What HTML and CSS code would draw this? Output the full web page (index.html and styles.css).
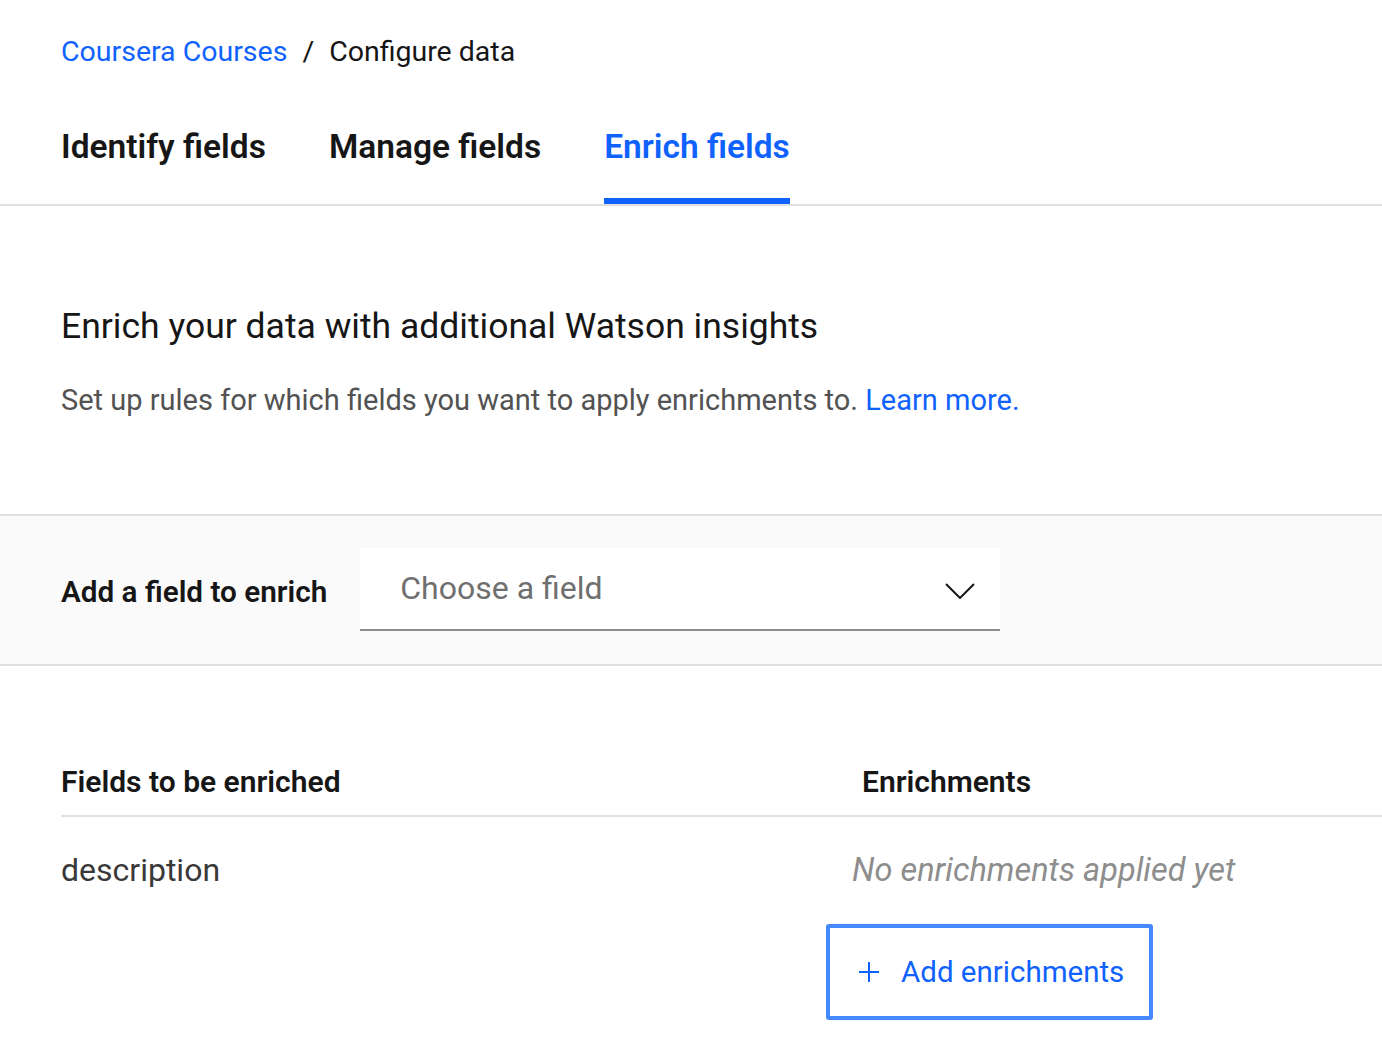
FILE: index.html
```html
<!DOCTYPE html>
<html lang="en">
<head>
<meta charset="utf-8">
<title>Configure data</title>
<link rel="stylesheet" href="styles.css">
</head>
<body>
  <nav class="breadcrumb">
    <a class="crumb-link" href="#">Coursera Courses</a>
    <span class="crumb-sep">/</span>
    <span class="crumb-current">Configure data</span>
  </nav>

  <div class="tabs">
    <div class="tab">Identify fields</div>
    <div class="tab">Manage fields</div>
    <div class="tab tab-active">Enrich fields</div>
  </div>

  <section class="intro">
    <h1 class="intro-title">Enrich your data with additional Watson insights</h1>
    <p class="intro-text">Set up rules for which fields you want to apply enrichments to. <a class="learn" href="#">Learn more.</a></p>
  </section>

  <section class="picker">
    <span class="picker-label">Add a field to enrich</span>
    <div class="select">
      <span class="select-placeholder">Choose a field</span>
      <svg class="chevron" width="30" height="16" viewBox="0 0 30 16" aria-hidden="true">
        <path d="M1 1 L15 15 L29 1" fill="none" stroke="#161616" stroke-width="2"/>
      </svg>
    </div>
  </section>

  <section class="table">
    <div class="table-head">
      <div class="col-field">Fields to be enriched</div>
      <div class="col-enrich head-enrich">Enrichments</div>
    </div>
    <div class="table-row">
      <div class="col-field field-name">description</div>
      <div class="col-enrich enrich-cell">
        <div class="empty-note">No enrichments applied yet</div>
        <button class="add-btn" type="button">
          <svg class="plus" width="22" height="22" viewBox="0 0 22 22" aria-hidden="true">
            <path d="M11 1 V21 M1 11 H21" fill="none" stroke="#0f62fe" stroke-width="2"/>
          </svg>
          <span>Add enrichments</span>
        </button>
      </div>
    </div>
  </section>
</body>
</html>
```

FILE: styles.css
```css
html, body {
  margin: 0;
  padding: 0;
  background: #ffffff;
  font-family: Roboto, "Noto Sans", "Liberation Sans", sans-serif;
  color: #161616;
}

.breadcrumb {
  display: flex;
  align-items: center;
  gap: 15px;
  padding: 34px 0 0 61px;
  font-size: 28.5px;
  line-height: 36px;
}

.crumb-link {
  color: #0f62fe;
  text-decoration: none;
}

.crumb-sep,
.crumb-current {
  color: #161616;
}

.tabs {
  display: flex;
  gap: 63px;
  padding: 0 0 0 61px;
  border-bottom: 2px solid #e0e0e0;
}

.tab {
  padding: 57px 0 31px;
  font-size: 33.5px;
  line-height: 40px;
  font-weight: 600;
  color: #161616;
  border-bottom: 6px solid transparent;
}

.tab-active {
  color: #0f62fe;
  border-bottom-color: #0f62fe;
}

.intro {
  padding: 100px 0 0 61px;
}

.intro-title {
  margin: 0;
  font-size: 35.5px;
  line-height: 40px;
  font-weight: 400;
  color: #161616;
}

.intro-text {
  margin: 36px 0 0;
  font-size: 29px;
  line-height: 36px;
  color: #525252;
}

.learn {
  color: #0f62fe;
  text-decoration: none;
}

.picker {
  margin-top: 96px;
  display: flex;
  align-items: center;
  gap: 33px;
  padding: 32px 0 33px 61px;
  background: #fafafa;
  border-top: 2px solid #e0e0e0;
  border-bottom: 2px solid #e0e0e0;
}

.picker-label {
  margin-top: 4px;
  font-size: 29.7px;
  line-height: 36px;
  font-weight: 600;
  color: #161616;
}

.select {
  width: 640px;
  height: 83px;
  box-sizing: border-box;
  display: flex;
  align-items: center;
  justify-content: space-between;
  padding: 0 25px 0 40px;
  background: #ffffff;
  border-bottom: 2px solid #8d8d8d;
}

.select-placeholder {
  font-size: 32px;
  line-height: 36px;
  color: #6f6f6f;
  margin-top: -2px;
}

.chevron {
  display: block;
  margin-top: 4px;
}

.table {
  padding: 0 0 0 61px;
}

.table-head {
  display: flex;
  margin-top: 98px;
  padding-bottom: 15px;
  border-bottom: 2px solid #e0e0e0;
  font-size: 30px;
  line-height: 36px;
  font-weight: 600;
  color: #161616;
}

.col-field {
  width: 785px;
  flex: none;
}

.head-enrich {
  padding-left: 16px;
}

.table-row {
  display: flex;
  padding-top: 35px;
}

.field-name {
  font-size: 32px;
  line-height: 36px;
  color: #393939;
}

.enrich-cell {
  display: flex;
  flex-direction: column;
  align-items: flex-start;
}

.empty-note {
  padding-left: 6px;
  font-size: 32.5px;
  line-height: 36px;
  font-style: italic;
  color: #8d8d8d;
}

.add-btn {
  margin: 36px 0 0 -20px;
  display: flex;
  align-items: center;
  gap: 21px;
  width: 327px;
  height: 96px;
  padding: 0 0 0 28px;
  background: #ffffff;
  border: 4px solid #4589ff;
  border-radius: 3px;
  font-family: inherit;
  font-size: 29.5px;
  line-height: 36px;
  color: #0f62fe;
  cursor: pointer;
}

.plus {
  display: block;
}
```
